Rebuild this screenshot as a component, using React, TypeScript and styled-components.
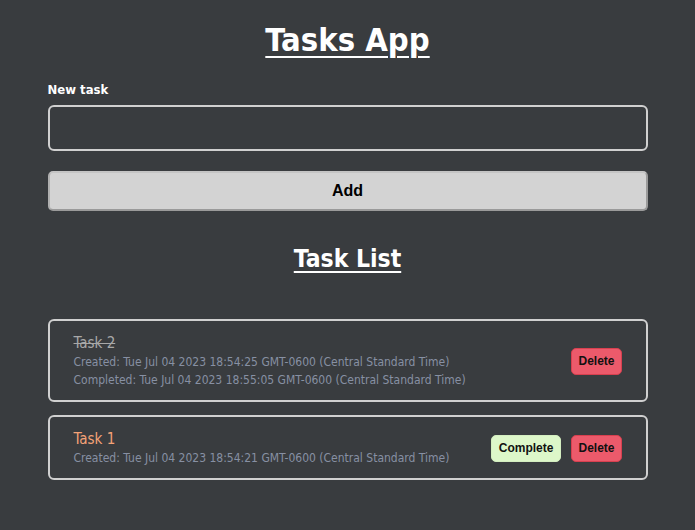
import React from "react";
import styled, { createGlobalStyle } from "styled-components";

const Global = createGlobalStyle`
  html, body { margin: 0; padding: 0; background: #393c3f; }
  body { font-family: "DejaVu Sans Condensed", "DejaVu Sans", sans-serif; color: #fff; }
`;

const Page = styled.div`
  width: 600px;
  margin: 0 auto;
  padding-top: 20px;
  display: flex;
  flex-direction: column;
`;

const Title = styled.h1`
  margin: 0;
  text-align: center;
  font-size: 32.5px;
  font-weight: bold;
  text-decoration: underline;
  text-underline-offset: 5px;
  text-decoration-thickness: 2px;
  line-height: 40px;
`;

const Label = styled.label`
  margin-top: 22px;
  font-size: 13px;
  font-weight: bold;
  line-height: 16px;
`;

const Input = styled.input`
  margin-top: 7px;
  height: 46px;
  box-sizing: border-box;
  border: 2px solid #d0d0d0;
  border-radius: 6px;
  background: transparent;
  color: #fff;
  padding: 0 10px;
  font-size: 15px;
  outline: none;
`;

const AddButton = styled.button`
  margin-top: 20px;
  height: 40px;
  box-sizing: border-box;
  background: #d3d3d3;
  border: 2px solid #9a9a9a;
  border-top-color: #c4c4c4;
  border-left-color: #b0b0b0;
  border-radius: 5px;
  font-family: "Liberation Sans", Arial, sans-serif;
  font-weight: bold;
  font-size: 16px;
  color: #000;
`;

const SubTitle = styled.h2`
  margin: 34px 0 0;
  text-align: center;
  font-size: 24.5px;
  font-weight: bold;
  text-decoration: underline;
  text-underline-offset: 4px;
  text-decoration-thickness: 2px;
  line-height: 28px;
`;

const List = styled.div`
  margin-top: 46px;
  display: flex;
  flex-direction: column;
  gap: 13px;
`;

const Card = styled.div`
  border: 2px solid #d0d0d0;
  border-radius: 6px;
  padding: 12px 24px 11px 24px;
  display: flex;
  align-items: center;
  justify-content: space-between;
`;

const Info = styled.div`
  display: flex;
  flex-direction: column;
`;

const TaskName = styled.div<{ $done?: boolean }>`
  font-size: 15px;
  line-height: 20px;
  color: ${(p) => (p.$done ? "#a8a8a8" : "#f4a277")};
  text-decoration: ${(p) => (p.$done ? "line-through" : "none")};
`;

const Meta = styled.div`
  font-size: 12px;
  line-height: 18px;
  color: #8790a3;
`;

const Actions = styled.div`
  display: flex;
  gap: 10px;
`;

const SmallButton = styled.button<{ $kind: "complete" | "delete" }>`
  height: 27px;
  padding: 0 ${(p) => (p.$kind === "delete" ? "6px" : "7px")};
  border-radius: 5px;
  font-family: "Liberation Sans", Arial, sans-serif;
  font-weight: bold;
  font-size: 12px;
  color: #111;
  background: ${(p) => (p.$kind === "delete" ? "#ec5a6b" : "#ddf7c9")};
  border: 1px solid ${(p) => (p.$kind === "delete" ? "#d8404f" : "#d4eec0")};
`;

export default function App() {
  return (
    <>
      <Global />
      <Page>
        <Title>Tasks App</Title>
        <Label>New task</Label>
        <Input type="text" />
        <AddButton>Add</AddButton>
        <SubTitle>Task List</SubTitle>
        <List>
          <Card>
            <Info>
              <TaskName $done>Task 2</TaskName>
              <Meta>Created: Tue Jul 04 2023 18:54:25 GMT-0600 (Central Standard Time)</Meta>
              <Meta>Completed: Tue Jul 04 2023 18:55:05 GMT-0600 (Central Standard Time)</Meta>
            </Info>
            <Actions>
              <SmallButton $kind="delete">Delete</SmallButton>
            </Actions>
          </Card>
          <Card>
            <Info>
              <TaskName>Task 1</TaskName>
              <Meta>Created: Tue Jul 04 2023 18:54:21 GMT-0600 (Central Standard Time)</Meta>
            </Info>
            <Actions>
              <SmallButton $kind="complete">Complete</SmallButton>
              <SmallButton $kind="delete">Delete</SmallButton>
            </Actions>
          </Card>
        </List>
      </Page>
    </>
  );
}
